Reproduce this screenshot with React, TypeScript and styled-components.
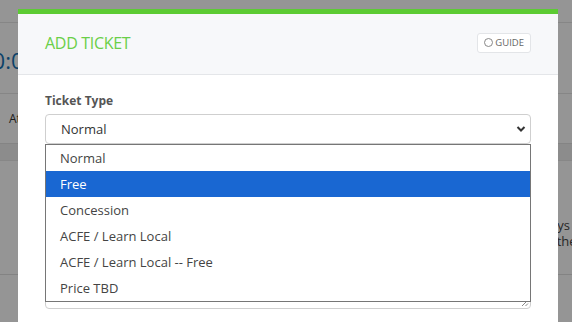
import styled, { createGlobalStyle } from "styled-components";

const GlobalStyle = createGlobalStyle`
    html, body {
        margin: 0;
        padding: 0;
        width: 572px;
        height: 322px;
        overflow: hidden;
        font-family: "Open Sans", "Liberation Sans", sans-serif;
    }
    * {
        box-sizing: border-box;
    }
`;

const options = [
    "Normal",
    "Free",
    "Concession",
    "ACFE / Learn Local",
    "ACFE / Learn Local -- Free",
    "Price TBD",
];

export default function App() {
    const selected = "Free";

    return (
        <>
            <GlobalStyle />
            <Page>
                {/* page behind the dialog */}
                <Backdrop>
                    <TopBar />
                    <TimerRow>
                        <Timer>10:00</Timer>
                    </TimerRow>
                    <TabRow>
                        <TabText>Attendees</TabText>
                    </TabRow>
                    <TableHead />
                    <ContentRow>
                        <SideNote>
                            days
                            <br />
                            in the
                        </SideNote>
                    </ContentRow>
                    <FooterRow />
                </Backdrop>
                <Overlay />

                <Modal>
                    <ModalHeader>
                        <ModalTitle>ADD TICKET</ModalTitle>
                        <GuideButton type="button">
                            <GuideCircle />
                            GUIDE
                        </GuideButton>
                    </ModalHeader>
                    <ModalBody>
                        <Field>
                            <FieldLabel>Ticket Type</FieldLabel>
                            <SelectWrap>
                                <SelectBox>
                                    <span>Normal</span>
                                    <svg width="10" height="8" viewBox="0 0 10 8">
                                        <path
                                            d="M1.5 2 L5 5.5 L8.5 2"
                                            fill="none"
                                            stroke="#333"
                                            strokeWidth="2"
                                        />
                                    </svg>
                                </SelectBox>
                                <ListBox>
                                    {options.map((item) => (
                                        <ListOption key={item} $active={item === selected}>
                                            {item}
                                        </ListOption>
                                    ))}
                                </ListBox>
                            </SelectWrap>
                        </Field>
                        <Field>
                            <FieldLabel>Description</FieldLabel>
                            <TextArea>
                                <ResizeGrip width="8" height="8" viewBox="0 0 8 8">
                                    <path d="M7 1 L1 7 M7 4.5 L4.5 7" stroke="#888" strokeWidth="1" />
                                </ResizeGrip>
                            </TextArea>
                        </Field>
                    </ModalBody>
                </Modal>
            </Page>
        </>
    );
}

const Page = styled.div`
    position: relative;
    width: 572px;
    height: 322px;
    overflow: hidden;
    background: #fff;
`;

const Backdrop = styled.div`
    display: flex;
    flex-direction: column;
    height: 100%;
`;

const TopBar = styled.div`
    height: 23px;
    border-bottom: 1px solid #e6e6e6;
    background: #fff;
`;

const TimerRow = styled.div`
    height: 71px;
    display: flex;
    align-items: center;
    border-bottom: 1px solid #e6e6e6;
    padding-top: 4px;
`;

const Timer = styled.div`
    margin-left: -20px;
    font-size: 22px;
    color: #1672b4;
`;

const TabRow = styled.div`
    height: 49px;
    display: flex;
    align-items: center;
    padding-left: 9px;
    font-size: 12px;
    color: #333;
`;

const TabText = styled.span`
    white-space: nowrap;
`;

const TableHead = styled.div`
    height: 18px;
    background: #f0f0f0;
    border-top: 1px solid #e2e2e2;
    border-bottom: 1px solid #e8e8e8;
`;

const ContentRow = styled.div`
    height: 114px;
    display: flex;
    align-items: center;
    border-bottom: 1px solid #e0e0e0;
    padding-top: 30px;
    padding-left: 542px;
`;

const SideNote = styled.div`
    font-size: 13px;
    line-height: 16px;
    color: #444;
    white-space: nowrap;
`;

const FooterRow = styled.div`
    flex: 1;
`;

const Overlay = styled.div`
    position: absolute;
    inset: 0;
    background: rgba(0, 0, 0, 0.415);
`;

const Modal = styled.div`
    position: absolute;
    left: 18px;
    top: 9px;
    width: 540px;
    height: 340px;
    background: #fff;
    border-top: 5px solid #5ccb33;
    display: flex;
    flex-direction: column;
`;

const ModalHeader = styled.div`
    height: 61px;
    padding: 0 27px;
    display: flex;
    align-items: center;
    justify-content: space-between;
    background: #f7f8fa;
    border-bottom: 1px solid #e4e6e9;
`;

const ModalTitle = styled.h2`
    margin: 0 0 2px;
    font-size: 16px;
    font-weight: 400;
    color: #6acf48;
    letter-spacing: -0.3px;
`;

const GuideButton = styled.button`
    display: flex;
    align-items: center;
    gap: 2px;
    height: 20px;
    margin-top: -3px;
    padding: 0 6px;
    background: #fff;
    border: 1px solid #e3e5e8;
    border-radius: 3px;
    font-family: inherit;
    font-size: 9.5px;
    color: #666;
    cursor: pointer;
`;

const GuideCircle = styled.span`
    width: 9px;
    height: 9px;
    border: 1.5px solid #888;
    border-radius: 50%;
`;

const ModalBody = styled.div`
    padding: 17px 27px 0;
    display: flex;
    flex-direction: column;
    gap: 12px;
`;

const Field = styled.div`
    display: flex;
    flex-direction: column;
`;

const FieldLabel = styled.label`
    font-size: 12px;
    font-weight: 700;
    color: #555;
    margin-bottom: 5px;
`;

const SelectWrap = styled.div`
    position: relative;
`;

const SelectBox = styled.div`
    height: 30px;
    padding: 0 4px 0 15px;
    display: flex;
    align-items: center;
    justify-content: space-between;
    border: 1px solid #cfcfcf;
    border-radius: 4px;
    font-size: 13px;
    color: #333;
`;

const ListBox = styled.div`
    position: absolute;
    left: 0;
    right: 0;
    top: 100%;
    border: 1px solid #767676;
    background: #fff;
    z-index: 2;
`;

const ListOption = styled.div<{ $active: boolean }>`
    height: 26px;
    line-height: 26px;
    padding-left: 14px;
    font-size: 13px;
    background: ${({ $active }) => ($active ? "#1967d2" : "#fff")};
    color: ${({ $active }) => ($active ? "#fff" : "#444")};
`;

const TextArea = styled.div`
    position: relative;
    height: 131px;
    border: 1px solid #cfcfcf;
    border-radius: 4px;
`;

const ResizeGrip = styled.svg`
    position: absolute;
    right: 1px;
    bottom: 1px;
`;
